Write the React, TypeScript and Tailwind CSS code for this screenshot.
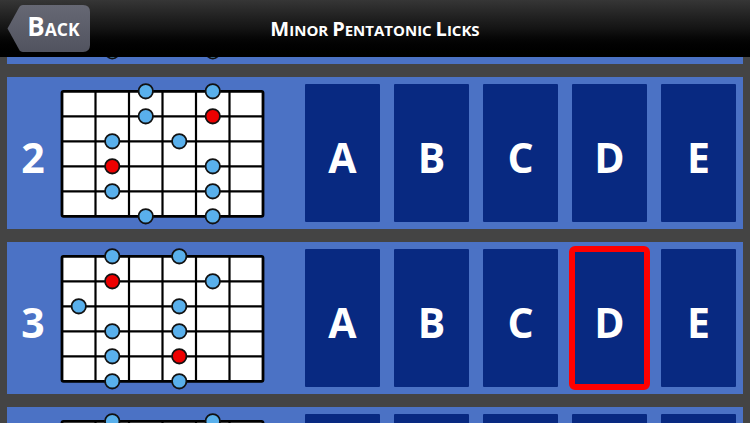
import React from "react";

// [column, string, isRoot]
type Dot = [number, number, boolean?];

type LickRow = { n: number; dots: Dot[]; selected?: string; offscreen?: boolean };

const LETTERS = ["A", "B", "C", "D", "E"];

const ROWS: LickRow[] = [
  {
    n: 1,
    offscreen: true,
    dots: [
      [1, 0], [4, 0, true], [1, 1], [3, 1], [1, 2], [3, 2, true],
      [0, 3], [3, 3], [1, 4, true], [3, 4], [1, 5], [4, 5],
    ],
  },
  {
    n: 2,
    dots: [
      [2, 0], [4, 0], [2, 1], [4, 1, true], [1, 2], [3, 2],
      [1, 3, true], [4, 3], [1, 4], [4, 4], [2, 5], [4, 5],
    ],
  },
  {
    n: 3,
    selected: "D",
    dots: [
      [1, 0], [3, 0], [1, 1, true], [4, 1], [0, 2], [3, 2],
      [1, 3], [3, 3], [1, 4], [3, 4, true], [1, 5], [3, 5],
    ],
  },
  {
    n: 4,
    offscreen: true,
    dots: [
      [1, 0], [4, 0], [1, 1], [4, 1], [1, 2, true], [3, 2],
      [1, 3], [4, 3], [2, 4], [4, 4, true], [2, 5], [4, 5],
    ],
  },
];

const X0 = 8;
const Y0 = 14.3;
const CW = 33.5;
const RH = 25;

function Fretboard({ dots }: { dots: Dot[] }) {
  const w = CW * 6;
  const h = RH * 5;
  return (
    <svg width={216} height={152} viewBox="0 0 216 152" className="shrink-0">
      <rect x={X0} y={Y0} width={w} height={h} fill="#fff" />
      {[1, 2, 3, 4, 5].map((i) => (
        <line key={`v${i}`} x1={X0 + CW * i} y1={Y0} x2={X0 + CW * i} y2={Y0 + h} stroke="#000" strokeWidth={2.2} />
      ))}
      {[1, 2, 3, 4].map((j) => (
        <line key={`h${j}`} x1={X0} y1={Y0 + RH * j} x2={X0 + w} y2={Y0 + RH * j} stroke="#000" strokeWidth={2.2} />
      ))}
      <rect x={X0} y={Y0} width={w} height={h} rx={1.5} fill="none" stroke="#000" strokeWidth={2.8} />
      {dots.map(([c, s, root], k) => (
        <circle
          key={k}
          cx={X0 + CW * (c + 0.5)}
          cy={Y0 + RH * s}
          r={7.2}
          fill={root ? "#ee0000" : "#59b0ec"}
          stroke="#111"
          strokeWidth={1.8}
        />
      ))}
    </svg>
  );
}

function BackButton() {
  return (
    <button className="relative flex h-[47px] w-[83px] items-center justify-center pl-[10px] pb-[6px] text-white font-bold leading-none">
      <svg className="absolute inset-0" width={83} height={47} viewBox="0 0 83 47">
        <defs>
          <linearGradient id="backg" x1="0" y1="0" x2="0" y2="1">
            <stop offset="0" stopColor="#666874" />
            <stop offset="1" stopColor="#51535f" />
          </linearGradient>
        </defs>
        <path
          d="M0.5 23.5 L12.5 1.8 Q13.6 0 15.8 0 L76 0 Q83 0 83 7 L83 40 Q83 47 76 47 L15.8 47 Q13.6 47 12.5 45.2 Z"
          fill="url(#backg)"
        />
      </svg>
      <span className="relative">
        <span className="text-[26px]">B</span>
        <span className="text-[17.5px]">ACK</span>
      </span>
    </button>
  );
}

export default function App() {
  return (
    <div className="flex h-[423px] w-[750px] flex-col overflow-hidden bg-[#444444] font-['Open_Sans',sans-serif]">
      <header className="grid h-[57px] shrink-0 grid-cols-[1fr_auto_1fr] items-center bg-linear-to-b from-[#363636] via-[#141414] to-[#000000]">
        <div className="pl-[7px]">
          <BackButton />
        </div>
        <h1 className="whitespace-nowrap font-bold leading-none text-white">
          <span className="text-[20px]">M</span>
          <span className="text-[15px]">INOR </span>
          <span className="text-[20px]">P</span>
          <span className="text-[15px]">ENTATONIC </span>
          <span className="text-[20px]">L</span>
          <span className="text-[15px]">ICKS</span>
        </h1>
        <div />
      </header>

      <div className="min-h-0 flex-1 overflow-hidden">
        <div className="mt-[-145px] flex flex-col gap-[13px] pl-[7px]">
          {ROWS.map((row) => (
            <div key={row.n} className="flex h-[152px] w-[736px] shrink-0 items-center bg-[#4b72c5]">
              <div className="w-[47px] shrink-0 pl-[5px] pt-[9px] text-center text-[41px] font-bold leading-none text-white">
                {row.offscreen ? null : row.n}
              </div>
              <Fretboard dots={row.dots} />
              <div className="ml-auto flex gap-[14px] pr-[7px]">
                {LETTERS.map((l) => (
                  <button
                    key={l}
                    className={`flex h-[138px] w-[75px] items-center justify-center rounded-[1px] bg-[#082981] pt-[9px] text-[41px] font-bold leading-none text-white ${
                      row.selected === l ? "rounded-[3px] outline-[6px] outline-solid outline-[#ff0000] -outline-offset-3" : ""
                    }`}
                  >
                    {row.offscreen ? null : l}
                  </button>
                ))}
              </div>
            </div>
          ))}
        </div>
      </div>
    </div>
  );
}
